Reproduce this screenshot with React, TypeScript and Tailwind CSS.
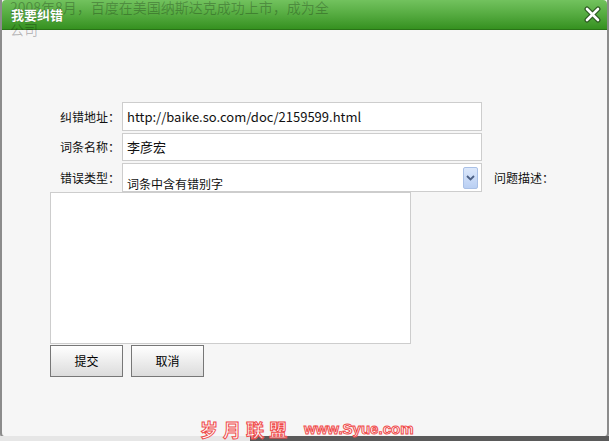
import React from "react";

const font = { fontFamily: '"Noto Sans CJK SC", "Liberation Sans", sans-serif' };

// little blue dropdown button on the select
const DropButton = () => (
    <div className="w-[15px] h-[22px] rounded-[2px] border border-[#a9c0e6] bg-gradient-to-b from-[#dce8fb] to-[#b9cff3] flex items-center justify-center">
        <svg width="9" height="6" viewBox="0 0 9 6">
            <path d="M1 1 L4.5 4.5 L8 1" fill="none" stroke="#4d6185" strokeWidth="1.8"/>
        </svg>
    </div>
);

const CloseIcon = () => (
    <svg width="17" height="17" viewBox="0 0 17 17">
        <path d="M3 3 L14 14 M14 3 L3 14" stroke="#2d5a22" strokeWidth="5" strokeLinecap="round"/>
        <path d="M3 3 L14 14 M14 3 L3 14" stroke="#ffffff" strokeWidth="2.6" strokeLinecap="round"/>
    </svg>
);

const App: React.FC = () => {
    return (
        <div className="relative w-[609px] h-[441px] overflow-hidden bg-[#d9d9d9] text-[12px] text-black" style={font}>
            <div className="flex flex-col h-[436px] rounded-b-[4px] border-l-2 border-r-2 border-[#8c8c8c] bg-[#f6f6f6] overflow-hidden shadow-[0_1px_2px_rgba(0,0,0,0.5)]">
                {/* title bar */}
                <div className="relative h-[30px] shrink-0 rounded-t-[4px] border-b border-[#2a7318] bg-gradient-to-b from-[#72c25e] via-[#55ab40] to-[#35911f] flex items-center justify-between pl-[9px] pr-[6px]">
                    {/* page text showing through the bar */}
                    <div className="absolute left-[8px] top-[0px] text-[14px] leading-[14px] text-black/25 whitespace-nowrap">
                        2008年8月，百度在美国纳斯达克成功上市，成为全
                    </div>
                    <div className="absolute left-[8px] top-[22px] text-[14px] leading-[14px] text-black/25 whitespace-nowrap">公司</div>
                    <span className="relative text-white font-bold text-[13px] [text-shadow:0_0_1px_#2b5d1f]">我要纠错</span>
                    <span className="relative"><CloseIcon/></span>
                </div>

                {/* form */}
                <div className="flex flex-col pt-[72px] pl-[48px]">
                    <div className="flex items-center h-[29px] mb-[2px]">
                        <span className="w-[72px] text-right pr-[2px] text-[#111]">纠错地址：</span>
                        <div className="w-[360px] h-full border border-[#cdcdcd] bg-white flex items-center px-[4px] text-[13px] text-[#111]">
                            http://baike.so.com/doc/2159599.html
                        </div>
                    </div>
                    <div className="flex items-center h-[28px] mb-[2px]">
                        <span className="w-[72px] text-right pr-[2px] text-[#111]">词条名称：</span>
                        <div className="w-[360px] h-full border border-[#cdcdcd] bg-white flex items-center px-[4px] text-[13px] text-[#111]">
                            李彦宏
                        </div>
                    </div>
                    <div className="flex h-[29px]">
                        <span className="w-[72px] text-right pr-[2px] pt-[6px] text-[#111]">错误类型：</span>
                        <div className="w-[360px] h-full border border-[#cdcdcd] bg-white flex items-center justify-between pl-[4px] pr-[3px]">
                            <span className="pt-[12px] text-[12px] text-[#111]">词条中含有错别字</span>
                            <DropButton/>
                        </div>
                        <span className="pl-[12px] pt-[6px] text-[#111]">问题描述：</span>
                    </div>
                    <div className="w-[361px] h-[152px] border border-[#cdcdcd] bg-white"></div>
                    <div className="flex gap-[8px] mt-[1px]">
                        <button className="w-[73px] h-[32px] border border-[#777] bg-gradient-to-b from-white to-[#dcdcdc] text-[12px]">提交</button>
                        <button className="w-[73px] h-[32px] border border-[#777] bg-gradient-to-b from-white to-[#dcdcdc] text-[12px]">取消</button>
                    </div>
                </div>
            </div>

            {/* page underneath, bottom strip */}
            <div className="flex h-[5px]">
                <div className="w-[250px] bg-[#e6e6e6]"></div>
                <div className="flex-1 bg-[#5a5a5a]"></div>
            </div>

            {/* watermark */}
            <div className="absolute left-[200px] top-[419px] flex items-center gap-[12px] leading-[20px] font-bold text-white/80 [-webkit-text-stroke:1px_#f04a4a]">
                <span className="text-[18px] tracking-[5px]">岁月联盟</span>
                <span className="text-[15px]" style={{fontFamily: '"Liberation Sans", sans-serif'}}>www.Syue.com</span>
            </div>
        </div>
    );
};

export default App;
